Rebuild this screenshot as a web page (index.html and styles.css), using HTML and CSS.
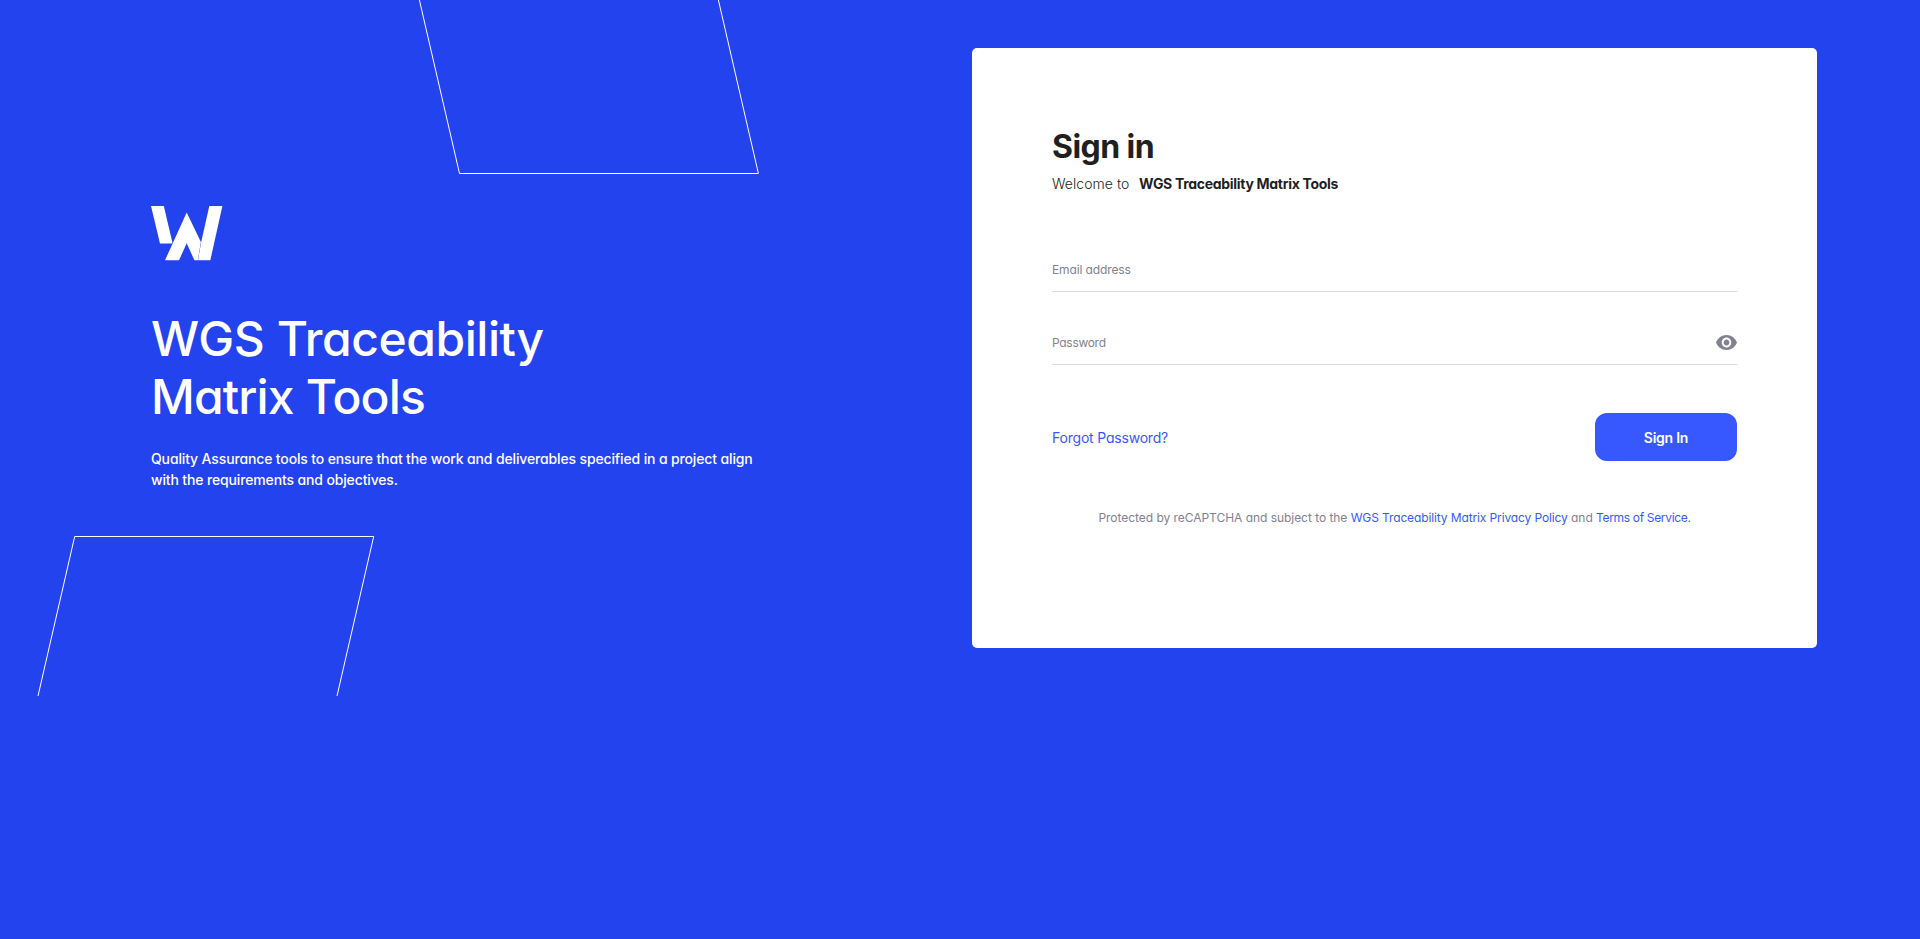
FILE: index.html
```html
<!DOCTYPE html>
<html lang="en">
<head>
<meta charset="utf-8">
<title>Sign in</title>
<link rel="stylesheet" href="styles.css">
</head>
<body>
<main class="page">
  <section class="intro">
    <svg class="outlines" width="800" height="696" viewBox="0 0 800 696" fill="none" stroke="#fff" aria-hidden="true">
      <path d="M419.4 0L459.5 173.5H758.4L718.4 0"/>
      <path d="M38 696L74.7 536.5H373.7L337 696"/>
    </svg>
    <svg class="logo" width="72" height="55" viewBox="0 0 72 55" fill="#fff" aria-hidden="true">
      <path d="M0 0H12.8L21.4 36.5L20.9 37.5H9Z"/>
      <path d="M35.7 6.500L49.900 36L46.800 54.300H43.400L35.700 37.200L28 54.300H14Z"/>
      <path d="M58.300 0H71.400L59.300 54.300H47L50.100 36.500Z"/>
    </svg>
    <h1 class="title"><span class="title-first">WGS Traceability</span><br><span class="title-second">Matrix Tools</span></h1>
    <p class="lead">Quality Assurance tools to ensure that the work and deliverables specified in a project align<br>with the requirements and objectives.</p>
  </section>
  <form class="card">
    <h2 class="heading">Sign in</h2>
    <p class="welcome"><span class="greeting">Welcome to</span><strong class="product">WGS Traceability Matrix Tools</strong></p>
    <div class="field"><span>Email address</span></div>
    <div class="field password"><span>Password</span>
      <svg class="eye" width="21" height="15" viewBox="1 4.5 22 15" preserveAspectRatio="none" fill="#82818f" aria-hidden="true"><path d="M12 4.5C7 4.5 2.730 7.610 1 12c1.730 4.390 6 7.500 11 7.500s9.270-3.110 11-7.500c-1.730-4.390-6-7.500-11-7.500zM12 17c-2.760 0-5-2.240-5-5s2.240-5 5-5 5 2.240 5 5-2.240 5-5 5zm0-8c-1.660 0-3 1.340-3 3s1.340 3 3 3 3-1.340 3-3-1.340-3-3-3z"/></svg>
    </div>
    <div class="actions">
      <a class="forgot">Forgot Password?</a>
      <button class="submit" type="button">Sign In</button>
    </div>
    <p class="legal">Protected by reCAPTCHA and subject to the <a class="privacy">WGS Traceability Matrix Privacy Policy</a> and <a class="terms">Terms of Service.</a></p>
  </form>
</main>
</body>
</html>
```

FILE: styles.css
```css
* { box-sizing: border-box; margin: 0; }
html { background: #2343ee; }
body {
  color: #1f1f1f;
  font-family: Inter, "Open Sans", sans-serif;
  font-feature-settings: "cv11" 1;
  min-height: 939px;
}
.page { display: grid; grid-template-columns: 972px 845px; height: 696px; }
.intro { position: relative; padding: 206px 0 0 151px; color: #fff; }
.outlines { position: absolute; left: 0; top: 0; }
.logo { display: block; }
.title { margin-top: 49px; font-size: 48px; line-height: 58px; font-weight: 500; white-space: nowrap; }
.title-first { letter-spacing: -0.45px; }
.title-second { letter-spacing: -0.85px; }
.lead { margin-top: 22px; font-size: 14px; line-height: 21px; font-weight: 500; letter-spacing: -0.14px; white-space: nowrap; }
.card { margin: 48px 0; padding: 80px; height: 600px; background: #fff; border-radius: 5px; }
.heading { font-size: 32px; line-height: 38px; font-weight: 700; letter-spacing: -0.55px; }
.welcome { display: flex; gap: 9px; margin-top: 8px; font-size: 14px; line-height: 20px; white-space: nowrap; }
.greeting { width: 78px; font-weight: 300; letter-spacing: 0.05px; }
.product { font-weight: 700; letter-spacing: -0.3px; }
.field { display: flex; align-items: center; justify-content: space-between; height: 44px; border-bottom: 1px solid #dadade; font-size: 12px; letter-spacing: -0.12px; color: #82818f; margin-top: 29px; }
.password { letter-spacing: -0.3px; }
.welcome + .field { margin-top: 54px; }
.actions { display: flex; align-items: center; justify-content: space-between; margin-top: 48px; height: 48px; }
.forgot { font-size: 14px; letter-spacing: -0.2px; color: #3858ff; }
.submit { width: 142px; height: 48px; border: 0; border-radius: 12px; background: #3858ff; color: #fff; font: inherit; font-size: 14px; font-weight: 600; letter-spacing: -0.25px; }
.legal { margin-top: 47px; text-align: center; font-size: 12px; line-height: 20px; letter-spacing: -0.04px; color: #82818f; white-space: nowrap; }
.legal a { color: #3858ff; }
.legal .privacy { letter-spacing: -0.12px; }
.legal .terms { letter-spacing: -0.33px; }
```
